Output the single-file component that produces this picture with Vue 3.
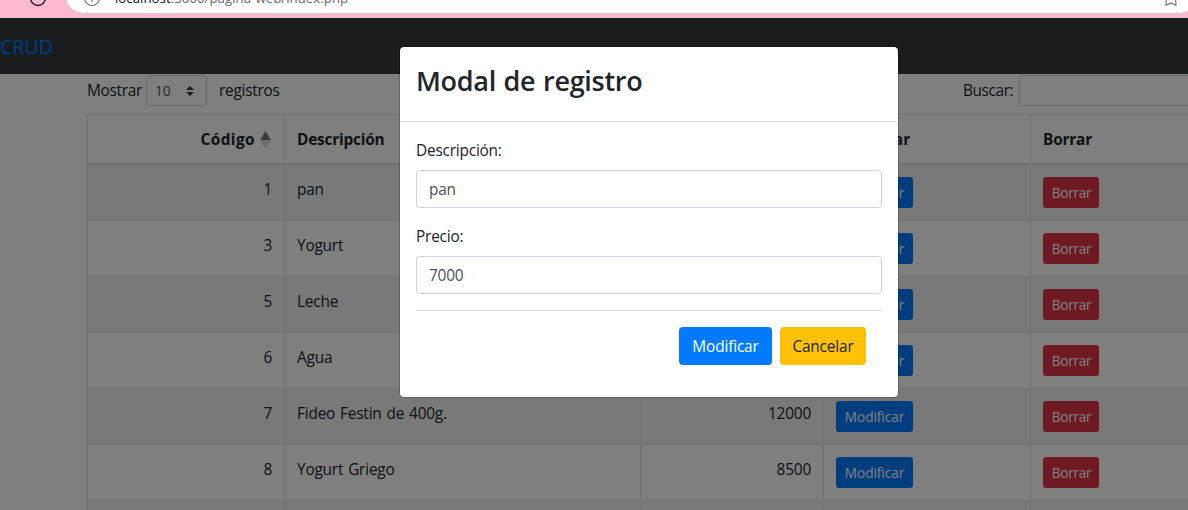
<script setup>
const rows = [
  { id: 1, name: 'pan', price: 7000 },
  { id: 3, name: 'Yogurt', price: 8000 },
  { id: 5, name: 'Leche', price: 6000 },
  { id: 6, name: 'Agua', price: 4000 },
  { id: 7, name: 'Fideo Festin de 400g.', price: 12000 },
  { id: 8, name: 'Yogurt Griego', price: 8500 },
]
</script>

<template>
  <div class="window">
    <div class="chrome">
      <svg class="reload" width="20" height="18" viewBox="0 0 20 18"><circle cx="10" cy="-2" r="7.4" fill="none" stroke="#222" stroke-width="1.5" /></svg>
      <div class="address">
        <svg class="info" width="20" height="13" viewBox="0 0 20 13"><circle cx="10" cy="-1.8" r="7.4" fill="none" stroke="#777" stroke-width="1.2" /><path d="M10 -4V2" stroke="#777" stroke-width="1.3" /></svg>
        <span class="url"><b>localhost</b>:3000/pagina-web/index.php</span>
        <svg class="star" width="14" height="13" viewBox="0 0 14 13"><path d="M2.4 -2L2 5.3L7 2.9L12 5.3L11.5 -2" fill="none" stroke="#777" stroke-width="1.1" /></svg>
      </div>
    </div>
    <div class="page">
      <nav class="navbar"><a>CRUD</a></nav>
      <div class="container">
        <div class="tools">
          <span class="t mostrar">Mostrar</span>
          <div class="select"><span>10</span>
            <svg width="8" height="10" viewBox="0 0 8 10"><path d="M4 0L8 4H0ZM0 6H8L4 10Z" fill="#343a40" /></svg>
          </div>
          <span class="t registros">registros</span>
          <span class="t buscar">Buscar:</span>
          <div class="search"></div>
        </div>
        <div class="table">
          <div class="row head">
            <div class="num"><span>Código</span>
              <svg width="11" height="18" viewBox="0 0 11 18"><path d="M5.5 0L10.7 9H0.3Z" fill="#777" /><path d="M0.3 9H10.7L5.5 18Z" fill="#dcdcdc" /></svg>
            </div>
            <div>Descripción</div><div class="num">Precio</div><div class="wide">Modificar</div><div>Borrar</div>
          </div>
          <div v-for="(r, i) in rows" :key="r.id" class="row" :class="{ odd: i % 2 === 0 }">
            <div class="num">{{ r.id }}</div>
            <div>{{ r.name }}</div>
            <div class="num">{{ r.price }}</div>
            <div><button class="btn-sm blue">Modificar</button></div>
            <div><button class="btn-sm red">Borrar</button></div>
          </div>
          <div class="row odd"><div v-for="n in 5" :key="n"></div></div>
        </div>
      </div>
      <div class="backdrop">
        <div class="modal">
          <div class="modal-head"><h3>Modal de registro</h3></div>
          <div class="modal-body">
            <label>Descripción:</label>
            <div class="field">pan</div>
            <label>Precio:</label>
            <div class="field">7000</div>
            <div class="foot">
              <button class="btn mod">Modificar</button>
              <button class="btn can">Cancelar</button>
            </div>
          </div>
        </div>
      </div>
    </div>
  </div>
</template>

<style>
body { margin: 0; overflow: hidden; }
</style>
<style scoped>
* { box-sizing: border-box; }
.window { width: 1188px; height: 510px; overflow: hidden; display: flex; flex-direction: column; font: 15.4px/24px "Open Sans", "Noto Sans", sans-serif; letter-spacing: -0.2px; word-spacing: 1.1px; color: #212529; }
.chrome { height: 18px; background: #ffbad2; display: flex; flex: none; overflow: hidden; }
.reload { margin-left: 28px; flex: none; }
.address { margin-left: 19px; width: 1130px; flex: none; height: 13px; background: #fff; border-radius: 0 0 20px 20px / 0 0 13px 13px; display: flex; overflow: hidden; box-shadow: 0 1px 0 #d9c5cf; }
.info { margin-left: 15px; flex: none; }
.url { margin: -14px 0 0 13px; width: 240px; white-space: nowrap; font-size: 13.3px; color: #6b6b6b; letter-spacing: 0; }
.url b { font-weight: 400; color: #111; }
.star { margin-left: 809px; flex: none; }
.page { height: 492px; position: relative; overflow: hidden; background: #fff; }
.navbar { height: 56px; background: #343a40; display: flex; align-items: center; font-size: 19.6px; color: #007bff; letter-spacing: -0.1px; padding-top: 2px; }
.container { margin-left: 87px; width: 1110px; }
.tools { height: 40px; padding-top: 1px; display: flex; align-items: flex-start; }
.t { line-height: 32px; white-space: nowrap; flex: none; }
.mostrar { width: 59px; letter-spacing: -0.3px; }
.select { flex: none; width: 61px; height: 31px; border: 1px solid #ced4da; border-radius: 3px; display: flex; align-items: center; justify-content: space-between; padding: 0 12px 0 8px; font-size: 13.8px; color: #495057; }
.registros { margin-left: 12px; width: 744px; letter-spacing: -0.25px; }
.buscar { width: 56px; letter-spacing: -0.4px; }
.search { width: 190px; height: 31px; border: 1px solid #ced4da; border-radius: 3px; flex: none; }
.table { border: 1px solid #dee2e6; border-right: 0; }
.row { display: grid; grid-template-columns: 197px 356px 183px 207px 167px; height: 56px; }
.row > div { border-top: 1px solid #dee2e6; border-right: 1px solid #dee2e6; padding: 13px 12px 0; white-space: nowrap; }
.odd { background: rgba(0, 0, 0, .05); }
.num { text-align: right; }
.head { height: 49px; font-weight: 700; }
.row.head > div { border-top: 0; border-bottom: 1px solid #dee2e6; }
.head .num:first-child { display: flex; justify-content: flex-end; gap: 5px; padding-right: 13px; letter-spacing: 0.4px; }
.head .wide { letter-spacing: 0.1px; }
.head svg { margin-top: 3px; }
button { font-family: inherit; border: 0; padding: 0; display: block; }
.btn-sm { height: 31px; margin-top: -1px; border-radius: 3px; color: #fff; font-size: 13.6px; letter-spacing: -0.05px; line-height: 31px; }
.blue { width: 77px; background: #007bff; }
.red { width: 56px; background: #dc3545; letter-spacing: -0.3px; padding-left: 1px; }
.backdrop { position: absolute; inset: 0; background: rgba(0, 0, 0, .5); }
.modal { margin: 28px 0 0 399px; width: 500px; height: 352px; border: 1px solid rgba(0, 0, 0, .2); border-radius: 5px; background: #fff; background-clip: padding-box; }
.modal-head { height: 75px; border-bottom: 1px solid #dee2e6; padding: 16px; }
h3 { margin: 0; font-size: 27px; line-height: 36px; font-weight: 600; letter-spacing: -0.3px; word-spacing: 1px; }
.modal-body { padding: 16px; }
label { display: block; padding-top: 1px; margin-bottom: 7px; }
.field { height: 38px; border: 1px solid #ced4da; border-radius: 4px; padding: 7px 12px 0; color: #495057; margin-bottom: 16px; }
.foot { border-top: 1px solid #dee2e6; padding: 16px 16px 0 0; display: flex; justify-content: flex-end; gap: 8px; }
.btn { height: 38px; border-radius: 4px; font-size: 15.4px; letter-spacing: -0.15px; padding-top: 1px; }
.mod { width: 93px; background: #007bff; color: #fff; font-weight: 500; }
.can { width: 86px; background: #ffc107; color: #212529; }
</style>
